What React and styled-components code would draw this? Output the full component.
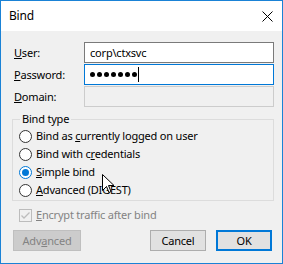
import * as React from "react";
import styled, { createGlobalStyle } from "styled-components";

const GlobalStyle = createGlobalStyle`
    body {
        margin: 0;
        font-family: "Noto Sans", "Liberation Sans", sans-serif;
        font-size: 11px;
        letter-spacing: -0.2px;
        color: #000;
    }
`;

const Window = styled.div`
    position: relative;
    width: 283px;
    height: 264px;
    box-sizing: border-box;
    border: 1px solid #1a82d6;
    background-color: #f0f0f0;
    display: flex;
    flex-direction: column;
`;

const TitleBar = styled.div`
    height: 30px;
    background-color: #fff;
    display: flex;
    flex-direction: row;
    align-items: center;
    justify-content: space-between;
    padding: 0 9px 0 8px;
`;

const Title = styled.span`
    font-size: 12px;
    line-height: 16px;
    margin-top: -1px;
`;

const Body = styled.div`
    display: flex;
    flex-direction: column;
    padding: 11px 8px 0 11px;
`;

const FieldRow = styled.div`
    display: flex;
    flex-direction: row;
    align-items: center;
    height: 21px;
    margin-bottom: 1px;
    padding-left: 2px;
`;

const Label = styled.span`
    width: 70px;
    line-height: 16px;
`;

const TextBox = styled.div`
    flex: 1;
    height: 21px;
    box-sizing: border-box;
    border: 1px solid ${(p) => (p.focused ? "#0078d7" : p.disabled ? "#cccccc" : "#7a7a7a")};
    background-color: ${(p) => (p.disabled ? "#f0f0f0" : "#fff")};
    display: flex;
    align-items: center;
    padding-left: 5px;
    line-height: 16px;
`;

const Dots = styled.span`
    display: flex;
    gap: 2px;
    margin-left: 0px;
`;

const Dot = styled.span`
    width: 5px;
    height: 5px;
    border-radius: 50%;
    background-color: #000;
`;

const Caret = styled.span`
    display: inline-block;
    width: 1px;
    height: 15px;
    background-color: #000;
    margin-left: 1px;
`;

const GroupBox = styled.fieldset`
    margin: 3px 0 0 0;
    padding: 0 0 1px 6px;
    border: 1px solid #dcdcdc;
    min-width: 0;
`;

const Legend = styled.legend`
    padding: 0 2px;
    margin-left: 1px;
    line-height: 16px;
    height: 16px;
`;

const OptionRow = styled.label`
    display: flex;
    flex-direction: row;
    align-items: center;
    height: 18px;
    line-height: 16px;
    color: ${(p) => (p.disabled ? "#838383" : "#000")};
`;

const Radio = styled.span`
    width: 13px;
    height: 13px;
    box-sizing: border-box;
    border-radius: 50%;
    border: 1px solid ${(p) => (p.checked ? "#0078d7" : "#333")};
    background-color: #fff;
    display: flex;
    align-items: center;
    justify-content: center;
    margin-right: 4px;
    &::after {
        content: "";
        width: 7px;
        height: 7px;
        border-radius: 50%;
        background-color: ${(p) => (p.checked ? "#0078d7" : "transparent")};
    }
`;

const CheckBox = styled.span`
    width: 13px;
    height: 13px;
    box-sizing: border-box;
    border: 1px solid #bcbcbc;
    background-color: #f0f0f0;
    display: flex;
    align-items: center;
    justify-content: center;
    margin-right: 4px;
`;

const CheckRow = styled(OptionRow)`
    margin-top: 5px;
    padding-left: 7px;
`;

const ButtonRow = styled.div`
    display: flex;
    flex-direction: row;
    margin-top: 6px;
    padding: 0 2px 0 1px;
`;

const Button = styled.div`
    height: 21px;
    width: ${(p) => p.w || 56}px;
    box-sizing: border-box;
    display: flex;
    align-items: center;
    justify-content: center;
    line-height: 16px;
    background-color: ${(p) => (p.disabled ? "#cccccc" : "#e1e1e1")};
    border: ${(p) => (p.primary ? "2px solid #0078d7" : p.disabled ? "1px solid #bfbfbf" : "1px solid #adadad")};
    color: ${(p) => (p.disabled ? "#838383" : "#000")};
    margin-left: ${(p) => p.ml || 0}px;
`;

const Spacer = styled.div`
    flex: 1;
`;

const Cursor = styled.svg`
    position: absolute;
    left: 101px;
    top: 173px;
`;

const App = () => {
    return (
        <Window>
            <GlobalStyle />
            <TitleBar>
                <Title>Bind</Title>
                <svg width="11" height="11" viewBox="0 0 11 11">
                    <path d="M0.5 0.5 L10.5 10.5 M10.5 0.5 L0.5 10.5" stroke="#000" strokeWidth="1" />
                </svg>
            </TitleBar>
            <Body>
                <FieldRow>
                    <Label><u>U</u>ser:</Label>
                    <TextBox>corp\ctxsvc</TextBox>
                </FieldRow>
                <FieldRow>
                    <Label><u>P</u>assword:</Label>
                    <TextBox focused>
                        <Dots>
                            {[0, 1, 2, 3, 4, 5, 6].map((i) => <Dot key={i} />)}
                        </Dots>
                        <Caret />
                    </TextBox>
                </FieldRow>
                <FieldRow>
                    <Label><u>D</u>omain:</Label>
                    <TextBox disabled />
                </FieldRow>
                <GroupBox>
                    <Legend>Bind type</Legend>
                    <OptionRow><Radio /><span>Bind as <u>c</u>urrently logged on user</span></OptionRow>
                    <OptionRow><Radio /><span>Bind with c<u>r</u>edentials</span></OptionRow>
                    <OptionRow><Radio checked /><span><u>S</u>imple bind</span></OptionRow>
                    <OptionRow><Radio /><span><u>A</u>dvanced (DIGEST)</span></OptionRow>
                </GroupBox>
                <CheckRow disabled>
                    <CheckBox>
                        <svg width="9" height="9" viewBox="0 0 9 9">
                            <path d="M0.5 4.5 L3 7 L8.5 1.5" stroke="#bcbcbc" strokeWidth="1.3" fill="none" />
                        </svg>
                    </CheckBox>
                    <span><u>E</u>ncrypt traffic after bind</span>
                </CheckRow>
                <ButtonRow>
                    <Button disabled w={68}><span>Adv<u>a</u>nced</span></Button>
                    <Spacer />
                    <Button>Cancel</Button>
                    <Button primary ml={10}>OK</Button>
                </ButtonRow>
            </Body>
            <Cursor width="13" height="20" viewBox="0 0 13 20">
                <path d="M0.5 0.5 L0.5 16.5 L4.5 12.5 L7 18.5 L9 17.5 L6.5 11.5 L12 11.5 Z" fill="#fff" stroke="#000" strokeWidth="1" strokeLinejoin="round" />
            </Cursor>
        </Window>
    );
};

export default App;
